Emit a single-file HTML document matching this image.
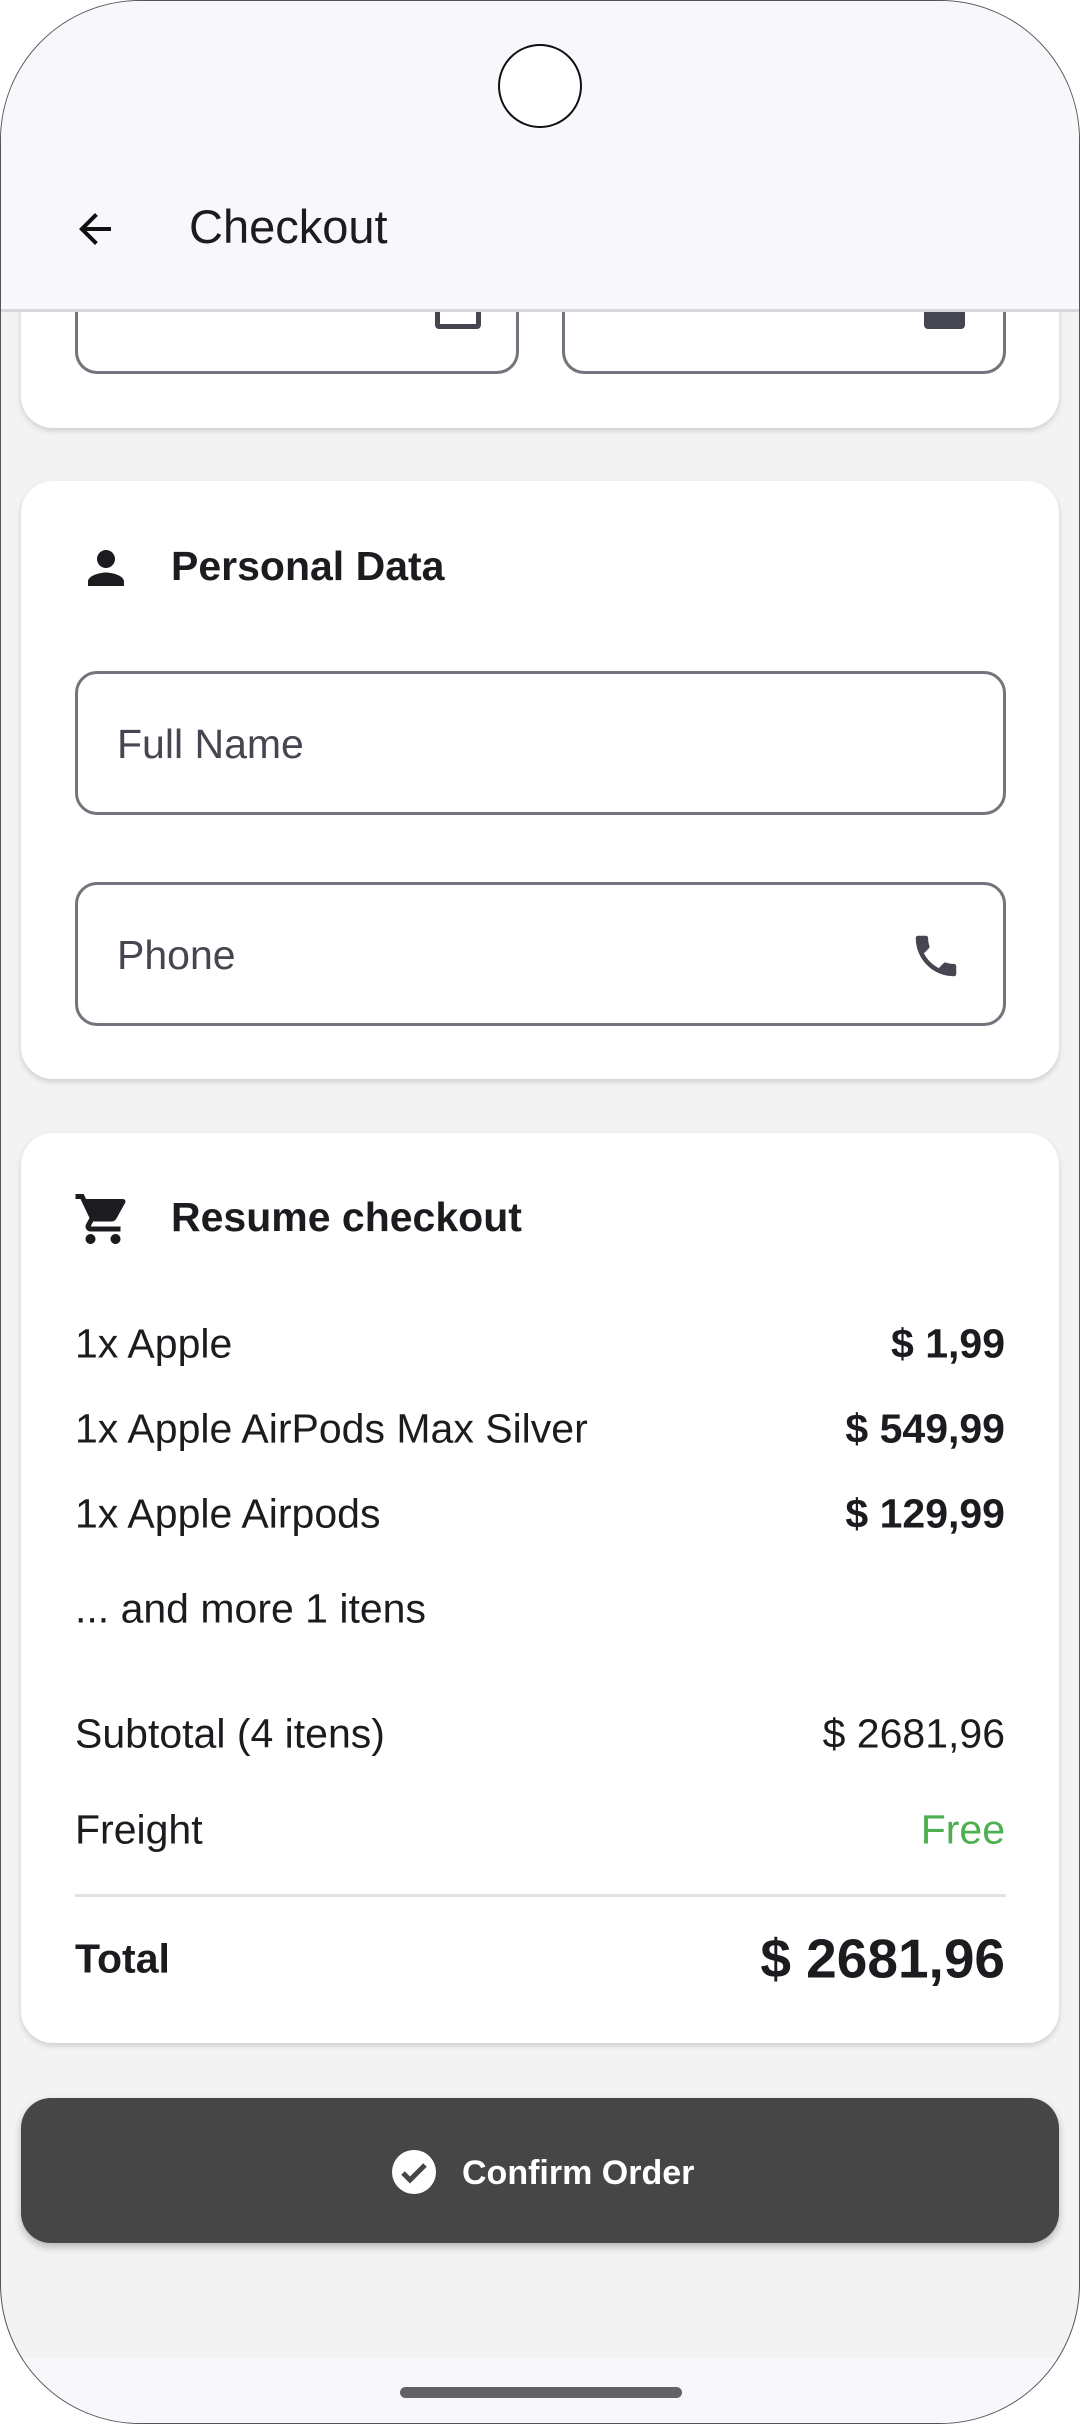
<!DOCTYPE html>
<html><head><meta charset="utf-8">
<style>
*{margin:0;padding:0;box-sizing:border-box}
html,body{width:1080px;height:2424px;background:#fff;overflow:hidden}
body{font-family:"Liberation Sans",Roboto,sans-serif;color:#1c1b1f;position:relative}
.screen{position:absolute;left:0;top:0;width:1080px;height:2424px;background:#f3f3f3;border-radius:140px;border:1.5px solid #555;overflow:hidden}
.appbar{position:absolute;left:0;top:0;width:1080px;height:311px;background:#f7f7fc;border-bottom:3px solid #d8d8dc;z-index:5}
.card{position:absolute;left:20px;width:1038px;background:#fff;border-radius:32px;box-shadow:0 3px 6px rgba(0,0,0,.15)}
.field{position:absolute;border:3px solid #74757c;border-radius:22px;background:#fff}
.t{position:absolute;white-space:nowrap;line-height:1}
.row{position:absolute;left:74px;width:930px;display:flex;justify-content:space-between;font-size:41px;line-height:1;transform:translateY(-50%)}
.row b{font-weight:bold}
</style></head><body>
<div class="screen">
 <div class="appbar">
  <div style="position:absolute;left:497px;top:43px;width:84px;height:84px;border-radius:50%;background:#fff;border:2px solid #111"></div>
  <svg style="position:absolute;left:70px;top:204px" width="48" height="48" viewBox="0 0 24 24"><path d="M20 11H7.83l5.59-5.59L12 4l-8 8 8 8 1.41-1.41L7.83 13H20v-2z" fill="#111"/></svg>
  <div class="t" style="left:188px;top:202px;font-size:47px;font-weight:500">Checkout</div>
 </div>

 <div class="card" style="top:200px;height:227px">
  <div class="field" style="left:54px;top:0;width:444px;height:173px;border-top:none;border-radius:0 0 22px 22px"></div>
  <div class="field" style="left:541px;top:0;width:444px;height:173px;border-top:none;border-radius:0 0 22px 22px"></div>
  <div style="position:absolute;left:414px;top:60px;width:46px;height:68px;border:5px solid #45464f;border-radius:4px"></div>
  <div style="position:absolute;left:903px;top:60px;width:41px;height:68px;background:#45464f;border-radius:4px"></div>
 </div>

 <div class="card" style="top:480px;height:598px">
  <svg style="position:absolute;left:58px;top:60px" width="54" height="54" viewBox="0 0 24 24"><path d="M12 12c2.21 0 4-1.79 4-4s-1.79-4-4-4-4 1.79-4 4 1.790 4 4 4zm0 2c-2.67 0-8 1.34-8 4v2h16v-2c0-2.66-5.33-4-8-4z" fill="#1c1b1f"/></svg>
  <div class="t" style="left:150px;top:65px;font-size:41px;font-weight:bold">Personal Data</div>
  <div class="field" style="left:54px;top:190px;width:931px;height:144px"></div>
  <div class="t" style="left:96px;top:243px;font-size:41px;color:#45464f">Full Name</div>
  <div class="field" style="left:54px;top:401px;width:931px;height:144px"></div>
  <div class="t" style="left:96px;top:454px;font-size:41px;color:#45464f">Phone</div>
  <svg style="position:absolute;left:888px;top:448px" width="54" height="54" viewBox="0 0 24 24"><path d="M6.62 10.79c1.44 2.830 3.76 5.14 6.59 6.59l2.2-2.2c.27-.27.67-.36 1.02-.24 1.12.37 2.33.57 3.57.57.55 0 1 .45 1 1V20c0 .55-.45 1-1 1-9.39 0-17-7.61-17-17 0-.55.45-1 1-1h3.5c.55 0 1 .45 1 1 0 1.25.2 2.45.57 3.57.11.35.03.74-.25 1.02l-2.2 2.2z" fill="#45464f"/></svg>
 </div>

 <div class="card" style="top:1132px;height:910px">
  <svg style="position:absolute;left:52px;top:56px" width="60" height="60" viewBox="0 0 24 24"><path d="M7 18c-1.1 0-1.99.9-1.99 2S5.9 22 7 22s2-.9 2-2-.9-2-2-2zM1 2v2h2l3.6 7.59-1.35 2.45c-.16.28-.25.61-.25.96 0 1.1.9 2 2 2h12v-2H7.42c-.14 0-.25-.11-.25-.25l.03-.12.9-1.63h7.450c.75 0 1.41-.41 1.75-1.03l3.58-6.49A1.003 1.003 0 0020 4H5.21l-.94-2H1zm16 16c-1.1 0-1.99.9-1.99 2s.89 2 1.99 2 2-.9 2-2-.9-2-2-2z" fill="#1c1b1f"/></svg>
 </div>
 <div class="t" style="left:170px;top:1196px;font-size:41px;font-weight:bold">Resume checkout</div>
 <div class="row" style="top:1343px"><span>1x Apple</span><b>$ 1,99</b></div>
 <div class="row" style="top:1428px"><span>1x Apple AirPods Max Silver</span><b>$ 549,99</b></div>
 <div class="row" style="top:1513px"><span>1x Apple Airpods</span><b>$ 129,99</b></div>
 <div class="row" style="top:1608px"><span>... and more 1 itens</span><span></span></div>
 <div class="row" style="top:1733px"><span>Subtotal (4 itens)</span><span>$ 2681,96</span></div>
 <div class="row" style="top:1829px"><span>Freight</span><span style="color:#4caf50">Free</span></div>
 <div style="position:absolute;left:74px;top:1893px;width:931px;height:3px;background:#e2e2e6"></div>
 <div class="row" style="top:1958px;align-items:center"><span style="font-weight:bold;font-size:41px">Total</span><span style="font-weight:bold;font-size:55px">$ 2681,96</span></div>

 <div style="position:absolute;left:20px;top:2097px;width:1038px;height:145px;background:#464646;border-radius:30px;box-shadow:0 4px 8px rgba(0,0,0,.25)"></div>
 <svg style="position:absolute;left:389px;top:2147px" width="48" height="48" viewBox="0 0 24 24"><circle cx="12" cy="12" r="11" fill="#fff"/><path d="M6.5 12.5l3.5 3.5 7.5-7.5" stroke="#464646" stroke-width="2.5" fill="none"/></svg>
 <div class="t" style="left:461px;top:2155px;font-size:34px;font-weight:bold;color:#fff">Confirm Order</div>

 <div style="position:absolute;left:0;top:2358px;width:1080px;height:70px;background:#f7f7fc"></div>
 <div style="position:absolute;left:399px;top:2386px;width:282px;height:11px;border-radius:6px;background:#626266"></div>
</div>
</body></html>
